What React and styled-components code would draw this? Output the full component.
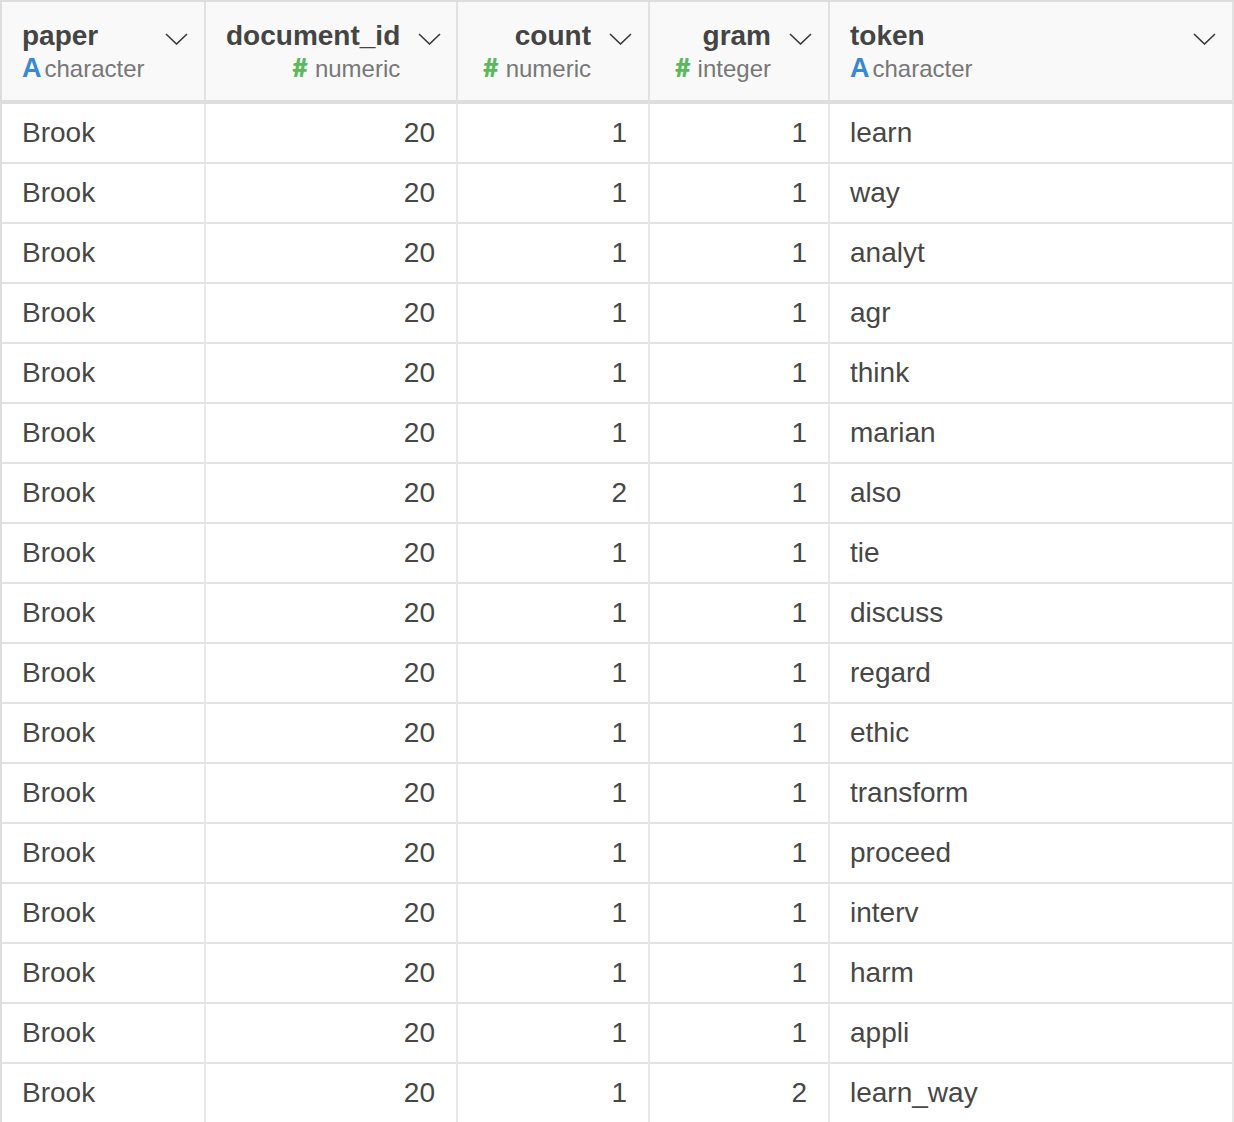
import React from "react";
import styled, { createGlobalStyle } from "styled-components";

const Global = createGlobalStyle`
  html, body { margin: 0; padding: 0; background: #fff; }
  body { font-family: "Liberation Sans", Arial, Helvetica, sans-serif; overflow: hidden; }
`;

const Table = styled.div`
  width: 1234px;
  box-sizing: border-box;
  border-top: 2px solid #dddddd;
  border-left: 2px solid #dddddd;
  display: grid;
  grid-template-columns: 204px 252px 192px 180px 404px;
`;

const HeadCell = styled.div`
  box-sizing: border-box;
  height: 102px;
  background: #f9f9f9;
  border-right: 2px solid #e2e2e2;
  border-bottom: 4px solid #dedede;
  padding: 18px 16px 0 20px;
  display: flex;
  align-items: flex-start;
  gap: 18px;
  justify-content: space-between;
`;

const HeadText = styled.div`
  flex: 1;
  display: flex;
  flex-direction: column;
  align-items: ${(p) => (p.$right ? "flex-end" : "flex-start")};
  gap: 3px;
`;

const Title = styled.div`
  font-size: 28px;
  line-height: 32px;
  font-weight: 700;
  color: #444;
  white-space: nowrap;
`;

const TypeLine = styled.div`
  font-size: 24px;
  line-height: 28px;
  height: 28px;
  color: #777;
  display: flex;
  align-items: baseline;
  white-space: nowrap;
`;

const AIcon = styled.span`
  font-size: 27px;
  line-height: 20px;
  font-weight: 700;
  color: #3a87d2;
  margin-right: 3px;
`;

const HashIcon = styled.span`
  font-family: Lato, "Liberation Sans", sans-serif;
  font-size: 27px;
  line-height: 20px;
  font-weight: 900;
  color: #5cb85c;
  margin-right: 7px;
`;

const Chevron = styled.svg`
  flex: none;
  width: 23px;
  height: 12px;
  margin-top: 13px;
`;

const Cell = styled.div`
  box-sizing: border-box;
  height: 60px;
  border-right: 2px solid #e8e8e8;
  border-bottom: 2px solid #e2e2e2;
  padding: 0 ${(p) => (p.$right ? "21px" : "0")} 0 ${(p) => (p.$right ? "0" : "20px")};
  display: flex;
  align-items: center;
  justify-content: ${(p) => (p.$right ? "flex-end" : "flex-start")};
  font-size: 28px;
  color: #474747;
  white-space: nowrap;
`;

const columns = [
  { name: "paper", type: "character", kind: "A", right: false },
  { name: "document_id", type: "numeric", kind: "#", right: true },
  { name: "count", type: "numeric", kind: "#", right: true },
  { name: "gram", type: "integer", kind: "#", right: true },
  { name: "token", type: "character", kind: "A", right: false },
];

const tokens = [
  "learn", "way", "analyt", "agr", "think", "marian", "also", "tie",
  "discuss", "regard", "ethic", "transform", "proceed", "interv", "harm",
  "appli", "learn_way",
];

const rows = tokens.map((t) => [
  "Brook",
  "20",
  t === "also" ? "2" : "1",
  t === "learn_way" ? "2" : "1",
  t,
]);

const ChevronIcon = () => (
  <Chevron viewBox="0 0 23 12">
    <path d="M1 1 L11.5 11 L22 1" fill="none" stroke="#3a3a3a" strokeWidth="1.6" />
  </Chevron>
);

export default function App() {
  return (
    <>
      <Global />
      <Table>
        {columns.map((c) => (
          <HeadCell key={c.name}>
            <HeadText $right={c.right}>
              <Title>{c.name}</Title>
              <TypeLine>
                {c.kind === "A" ? <AIcon>A</AIcon> : <HashIcon>#</HashIcon>}
                {c.type}
              </TypeLine>
            </HeadText>
            <ChevronIcon />
          </HeadCell>
        ))}
        {rows.map((r, i) =>
          r.map((v, j) => (
            <Cell key={`${i}-${j}`} $right={columns[j].right}>
              {v}
            </Cell>
          ))
        )}
      </Table>
    </>
  );
}
